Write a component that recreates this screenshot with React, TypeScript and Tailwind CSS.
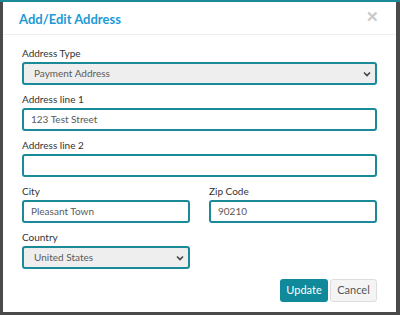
import React from "react";

const font = { fontFamily: "Lato, 'Open Sans', sans-serif" };

function Field({ label, children }: { label: string; children: React.ReactNode }) {
  return (
    <div className="flex flex-col">
      <label className="text-[10px] leading-[12px] text-[#333] mb-[3px]">{label}</label>
      {children}
    </div>
  );
}

function TextInput({ value }: { value: string }) {
  return (
    <div className="h-[23px] border-2 border-[#1a8a99] rounded-[3px] bg-white px-[7px] flex items-center text-[10px] text-[#5a5a5a]">
      {value}
    </div>
  );
}

function Select({ value }: { value: string }) {
  return (
    <div className="h-[23px] border-2 border-[#1a8a99] rounded-[3px] bg-[#eeeeee] pl-[10px] pr-[4px] flex items-center justify-between text-[10px] text-[#5a5a5a]">
      <span>{value}</span>
      <svg width="8" height="6" viewBox="0 0 8 6">
        <path d="M1 1.5 L4 4.5 L7 1.5" fill="none" stroke="#444" strokeWidth="1.6" />
      </svg>
    </div>
  );
}

export default function App() {
  return (
    <div className="w-[400px] h-[315px] bg-[#4a4a4a] relative overflow-hidden" style={font}>
      <div className="h-[2px] bg-[#1a8a99]" />
      <div className="absolute left-[3px] top-[2px] w-[393px] h-[310px] bg-white flex flex-col">
        {/* Header */}
        <div className="h-[33px] border-b border-[#eeeeee] flex items-center justify-between pl-[16px] pr-[17px]">
          <h4 className="text-[13px] font-bold text-[#1d9ad6] mt-[4px]">Add/Edit Address</h4>
          <span className="text-[15px] font-bold text-[#c8c8c8] leading-none mt-[-4px]">✕</span>
        </div>

        {/* Body */}
        <div className="px-[19px] pt-[12px] flex flex-col gap-[8px]">
          <Field label="Address Type">
            <Select value="Payment Address" />
          </Field>
          <Field label="Address line 1">
            <TextInput value="123 Test Street" />
          </Field>
          <Field label="Address line 2">
            <TextInput value="" />
          </Field>
          <div className="grid grid-cols-2 gap-[19px]">
            <Field label="City">
              <TextInput value="Pleasant Town" />
            </Field>
            <Field label="Zip Code">
              <TextInput value="90210" />
            </Field>
          </div>
          <div className="grid grid-cols-2 gap-[19px]">
            <Field label="Country">
              <Select value="United States" />
            </Field>
            <div />
          </div>
          <div className="flex justify-end gap-[2px] mt-[2px]">
            <button className="h-[23px] w-[48px] bg-[#10899a] text-white text-[11px] rounded-[3px]">Update</button>
            <button className="h-[23px] w-[47px] bg-[#f4f4f4] border border-[#dddddd] text-[#555] text-[11px] rounded-[3px]">Cancel</button>
          </div>
        </div>
      </div>
    </div>
  );
}
